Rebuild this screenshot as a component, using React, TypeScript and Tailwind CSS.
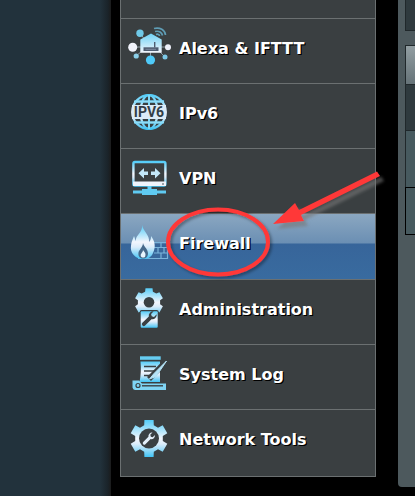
import type { ReactNode } from "react";

const LIGHT = "url(#iconShine)";
const DARK = "#3a4043";

function gearPath(cx: number, cy: number, outer: number, inner: number): string {
  const points: string[] = [];
  for (let i = 0; i < 6; i++) {
    const a = -90 + i * 60;
    const corners: [number, number][] = [
      [a - 20, inner],
      [a - 14, outer],
      [a + 14, outer],
      [a + 20, inner],
    ];
    for (const [deg, r] of corners) {
      const t = (deg * Math.PI) / 180;
      points.push(`${(cx + r * Math.cos(t)).toFixed(1)} ${(cy + r * Math.sin(t)).toFixed(1)}`);
    }
  }
  return `M${points.join("L")}Z`;
}

function Icon({ children }: { children: ReactNode }) {
  return (
    <svg viewBox="0 0 44 44" className="size-11 shrink-0 overflow-visible" aria-hidden="true">
      {children}
    </svg>
  );
}

function AlexaIcon() {
  return (
    <Icon>
      <path d="M6 22H41M13 8L18 15M9 31L15 26M38 32L33 27M23.5 27V33" stroke="#8d9da6" strokeWidth="1" />
      <path d="M13.3 14.5L24 8.5L34.7 14.5V27.700H13.3Z" fill="url(#houseShine)" />
      <circle cx="13" cy="8.300" r="3.700" fill="#6fc9e8" />
      <circle cx="5.700" cy="22.200" r="4.500" fill="#f1f3fb" />
      <circle cx="9.200" cy="31" r="2.600" fill="#8ccfe8" />
      <circle cx="23.500" cy="35" r="4.600" fill="#4fcaf8" />
      <circle cx="38" cy="32" r="2.500" fill="#7cc8e6" />
      <circle cx="41" cy="22.300" r="3" fill="#eef1fa" />
      <path d="M16.500 22.300H31.500V26H16.500Z" fill="#4f5c70" />
      <path d="M27.700 17V22.500" stroke="#4f5c70" strokeWidth="1.400" />
      <path d="M18.500 24.300H29" stroke="#8996aa" strokeWidth="0.800" />
      <path d="M27 3.500C33 2 38 5 38.500 10M28 6.500C32 5.500 35 7.500 35.500 10.500M29 9.500C31 8.800 32.300 9.500 32.500 11" fill="none" stroke="#5f9db5" strokeWidth="1.700" />
    </Icon>
  );
}

function Ipv6Icon() {
  return (
    <Icon>
      <g fill="none" stroke={LIGHT} strokeWidth="2.200">
        <circle cx="22" cy="22" r="16.800" />
        <ellipse cx="22" cy="22" rx="8.500" ry="16.800" />
        <path d="M8 11.500H36L36 11.600M8 32.500H36L36 32.600" />
      </g>
      <path d="M22 5V39" stroke="#7fd9f7" strokeWidth="2" />
      <path d="M7 11.500H37M7 32.500H37" stroke="#8edcf7" strokeWidth="1.800" />
      <path d="M5 15H39V29H5Z" fill="#dcebf7" />
      <text x="22" y="27" textAnchor="middle" fontSize="14" fontWeight="700" fill="#333e46" className="font-['Roboto',sans-serif]">
        IPV6
      </text>
    </Icon>
  );
}

function VpnIcon() {
  return (
    <Icon>
      <rect x="6.400" y="7" width="32" height="23.500" rx="1.500" fill="none" stroke={LIGHT} strokeWidth="2.400" />
      <path d="M6 26.500H39V31H6Z" fill="#eef3fb" />
      <circle cx="36" cy="29" r="0.800" fill={DARK} />
      <path d="M11.500 18.300L17 13V16.600H21V20H17V23.600ZM33.500 18.300L28 13V16.600H24V20H28V23.600Z" fill="#c3e7f8" />
      <path d="M20.500 31H24.500V34H30V35.500H39V38.500H30V40H15V38.500H6V35.500H15V34H20.500Z" fill="#5fcaf1" />
    </Icon>
  );
}

function FirewallIcon() {
  return (
    <Icon>
      <path d="M27 22.500H40.500V38.500H11M27 27.500H40M27 33H40M34 22.500V27.500M31 27.500V33M37 27.500V33M34 33V38.500" fill="none" stroke="#79b3da" strokeWidth="1.200" />
      <path
        d="M15 5C16 11 23 15 22 22C24 20 24 18 24 16C28 21 29 27 26 33C25 36 22 38.500 18 39H13C7 37 3 32 4 26C4 22 6 19 7 16C8 18 8 20 9 21C8 15 16 13 15 5Z"
        fill={LIGHT}
      />
      <path d="M16 23C17 27 21 29 21 33.500C21 36.500 19 38.500 16 38.500C12.500 38.500 11 36 11.500 32.500C12 30 16 27 16 23Z" fill="#46698b" />
      <path d="M16 30C18 32.500 19 33.500 18.300 36C18 38 14.500 38 13.800 36C13.300 33.500 16 32.500 16 30Z" fill="#e8f5fd" />
    </Icon>
  );
}

function Wrench({ transform, fill }: { transform: string; fill: string }) {
  return (
    <path
      transform={transform}
      d="M-2 -1L-2 8.500A2 2 0 0 0 2 8.500L2 -1A4.600 4.600 0 0 0 2.200 -8.500L2.200 -4.500L0 -3.300L-2.200 -4.500L-2.200 -8.500A4.600 4.600 0 0 0 -2 -1Z"
      fill={fill}
    />
  );
}

function AdministrationIcon() {
  return (
    <Icon>
      <path d={gearPath(22, 16.3, 14.5, 11.3)} fill={LIGHT} />
      <circle cx="22" cy="16.300" r="5.300" fill={DARK} />
      <rect x="12.700" y="24" width="19" height="18.500" rx="2" fill={DARK} />
      <rect x="13.700" y="25.200" width="17" height="16.600" rx="1" fill={LIGHT} />
      <Wrench transform="translate(22.500 32.500) rotate(45) scale(.95)" fill={DARK} />
    </Icon>
  );
}

function SystemLogIcon() {
  return (
    <Icon>
      <path d="M13 5.300H33.700V8.800H13Z" fill="#66cdf2" />
      <path d="M13.500 10.500H33V31H12.500Q14.500 22 13.500 10.500Z" fill={LIGHT} />
      <path d="M17 15.500H29M17 20H27M17 24.500H23" stroke={DARK} strokeWidth="1.500" />
      <path d="M40 9.500L22 28" stroke={DARK} strokeWidth="5.500" />
      <path d="M39.500 10L27 22.500L22.500 28L29 25.500Z" fill="#b5e3f7" stroke="#b5e3f7" strokeWidth="1" />
      <path d="M5.500 29.500H12L15 32.500H39V39H8A3 3 0 0 1 5.500 36.500Z" fill="#7fd4f4" />
      <circle cx="11" cy="34.500" r="2" fill="none" stroke={DARK} strokeWidth="1.200" />
      <path d="M15 34.800H36" stroke={DARK} strokeWidth="1.400" />
    </Icon>
  );
}

function NetworkToolsIcon() {
  return (
    <Icon>
      <path d={gearPath(22, 22.5, 19, 14)} fill={LIGHT} />
      <circle cx="22" cy="22.500" r="10" fill={DARK} />
      <Wrench transform="translate(22 22.500) rotate(45) scale(.78)" fill="#e3effa" />
    </Icon>
  );
}

const items = [
  { label: "Alexa & IFTTT", icon: <AlexaIcon /> },
  { label: "IPv6", icon: <Ipv6Icon /> },
  { label: "VPN", icon: <VpnIcon /> },
  { label: "Firewall", icon: <FirewallIcon />, active: true },
  { label: "Administration", icon: <AdministrationIcon /> },
  { label: "System Log", icon: <SystemLogIcon /> },
  { label: "Network Tools", icon: <NetworkToolsIcon /> },
];

function Sidebar() {
  return (
    <nav aria-label="Advanced settings" className="w-64 shrink-0 self-start border-x border-b border-[#6b7071] bg-[#3a3f41] pb-0.5">
      <div className="h-[18px]" />
      {items.map(({ label, icon, active }) => (
        <a
          key={label}
          href={`#${label.toLowerCase().replace(/\W+/g, "-")}`}
          aria-current={active ? "page" : undefined}
          className={`flex items-start gap-2 border-t border-[#6b7071] pt-1.5 pl-1.5 text-white ${
            active
              ? "h-[66px] bg-[linear-gradient(#8ba7c1_0,#6b8fb3_29px,#37659a_30px,#396b9f_100%)]"
              : "h-[65px]"
          }`}
        >
          {icon}
          <span className="pt-3 font-['DejaVu_Sans',Verdana,sans-serif] text-base leading-6 font-bold whitespace-nowrap [text-shadow:1px_1px_0_#000,1px_1px_0_#000]">
            {label}
          </span>
        </a>
      ))}
    </nav>
  );
}

function ContentPanel() {
  return (
    <main className="h-[487px] min-w-0 flex-1 overflow-hidden rounded-bl bg-[#4d595d] pl-[7px]">
      <div className="h-[31px] border-b border-l border-[#20282b] bg-[#2f3a3e]" />
      <div className="mt-3.5 border-l border-[#20282b]">
        <div className="h-10 border-y border-[#20282b] bg-linear-to-b from-[#929ea2] to-[#667378]" />
        <div className="h-[46px] border-b border-[#20282b] bg-[#2f3a3e]" />
        <div className="h-14 bg-[#475a5f]" />
      </div>
      <div className="h-12 border-y border-l border-black bg-[#475a5f]" />
    </main>
  );
}

function Annotation() {
  return (
    <svg width="415" height="496" viewBox="0 0 415 496" className="pointer-events-none absolute top-0 left-0" aria-hidden="true">
      <defs>
        <filter id="markShadow" x="-20%" y="-20%" width="150%" height="150%">
          <feDropShadow dx="4" dy="5" stdDeviation="1.500" floodColor="#777" floodOpacity="0.600" />
        </filter>
        <filter id="ringShadow" x="-20%" y="-20%" width="150%" height="150%">
          <feDropShadow dx="2" dy="2" stdDeviation="1.500" floodColor="#000" floodOpacity="0.350" />
        </filter>
      </defs>
      <ellipse cx="218" cy="242" rx="50" ry="32.500" fill="none" stroke="#ff3838" strokeWidth="4" filter="url(#ringShadow)" />
      <path d="M273 224L295 203L299 210L377 171.500L380 176L301 215L304 221Z" fill="#ff3838" filter="url(#markShadow)" />
    </svg>
  );
}

export default function App() {
  return (
    <div className="relative flex min-h-screen overflow-hidden bg-black">
      <svg width="0" height="0" className="absolute" aria-hidden="true">
        <defs>
          <linearGradient id="iconShine" x1="0" y1="0" x2="0" y2="1">
            <stop offset="0" stopColor="#55cdf8" />
            <stop offset="0.500" stopColor="#f3f6fd" />
            <stop offset="0.650" stopColor="#dbecfa" />
            <stop offset="1" stopColor="#42c4f5" />
          </linearGradient>
          <linearGradient id="houseShine" x1="0" y1="0" x2="0" y2="1">
            <stop offset="0" stopColor="#6fd2f5" />
            <stop offset="1" stopColor="#f3f6fd" />
          </linearGradient>
        </defs>
      </svg>
      <div className="w-[111px] shrink-0 bg-[linear-gradient(90deg,#22323c_0,#22323c_100px,#1a2329_108px,#1c1c1c_111px)]" />
      <div className="flex min-w-0 flex-1 gap-[22px] pl-[9px]">
        <Sidebar />
        <ContentPanel />
      </div>
      <Annotation />
    </div>
  );
}
